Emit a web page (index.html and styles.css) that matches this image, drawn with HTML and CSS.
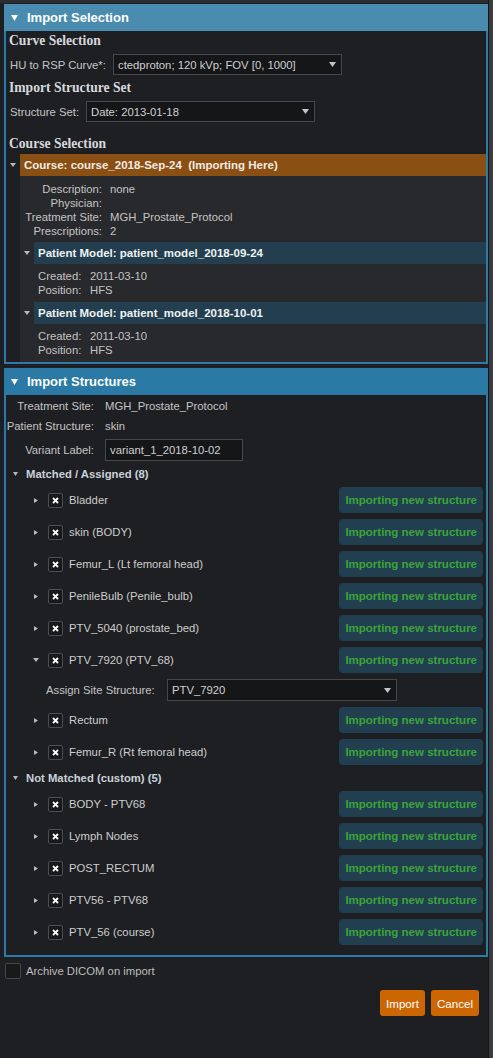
FILE: index.html
```html
<!DOCTYPE html>
<html>
<head>
<meta charset="utf-8">
<title>Import</title>
<link rel="stylesheet" href="styles.css">
</head>
<body>
<div class="app">
  <div class="main">
    <section class="panel">
      <div class="panel-header hdr-light">
        <svg class="hdr-caret" width="7" height="6" viewBox="0 0 7 6"><polygon points="0,0 7,0 3.5,6" fill="#fff"/></svg>
        <span>Import Selection</span>
      </div>
      <div class="panel-body">
        <h3 class="sec-title">Curve Selection</h3>
        <div class="field-row">
          <span class="lbl lbl-hu">HU to RSP Curve*:</span>
          <div class="select w229"><span class="sel-txt">ctedproton; 120 kVp; FOV [0, 1000]</span><svg width="7" height="5" viewBox="0 0 7 5"><polygon points="0,0 7,0 3.5,5" fill="#c4c4c4"/></svg></div>
        </div>
        <h3 class="sec-title mt3">Import Structure Set</h3>
        <div class="field-row mt4">
          <span class="lbl lbl-ss">Structure Set:</span>
          <div class="select w229"><span class="sel-txt">Date: 2013-01-18</span><svg width="7" height="5" viewBox="0 0 7 5"><polygon points="0,0 7,0 3.5,5" fill="#c4c4c4"/></svg></div>
        </div>
        <h3 class="sec-title mt12">Course Selection</h3>
        <div class="node-row">
          <span class="caret-col"><svg width="6" height="4" viewBox="0 0 6 4"><polygon points="0,0 6,0 3,4" fill="#b8b8b8"/></svg></span>
          <div class="course-bar">Course: course_2018-Sep-24&nbsp; (Importing Here)</div>
        </div>
        <div class="course-body">
          <div class="course-details">
            <span class="dl">Description:</span><span class="dv">none</span>
            <span class="dl">Physician:</span><span class="dv"></span>
            <span class="dl">Treatment Site:</span><span class="dv">MGH_Prostate_Protocol</span>
            <span class="dl">Prescriptions:</span><span class="dv">2</span>
          </div>
          <div class="pm">
            <div class="node-row">
              <span class="caret-col"><svg width="6" height="4" viewBox="0 0 6 4"><polygon points="0,0 6,0 3,4" fill="#b8b8b8"/></svg></span>
              <div class="pm-bar">Patient Model: patient_model_2018-09-24</div>
            </div>
            <div class="pm-details">
              <span>Created:</span><span>2011-03-10</span>
              <span>Position:</span><span>HFS</span>
            </div>
          </div>
          <div class="pm pm-last">
            <div class="node-row">
              <span class="caret-col"><svg width="6" height="4" viewBox="0 0 6 4"><polygon points="0,0 6,0 3,4" fill="#b8b8b8"/></svg></span>
              <div class="pm-bar">Patient Model: patient_model_2018-10-01</div>
            </div>
            <div class="pm-details">
              <span>Created:</span><span>2011-03-10</span>
              <span>Position:</span><span>HFS</span>
            </div>
          </div>
        </div>
      </div>
    </section>

    <section class="panel panel2">
      <div class="panel-header hdr-dark">
        <svg class="hdr-caret" width="7" height="6" viewBox="0 0 7 6"><polygon points="0,0 7,0 3.5,6" fill="#fff"/></svg>
        <span>Import Structures</span>
      </div>
      <div class="panel-body body2">
        <div class="info-row"><span class="info-lbl">Treatment Site:</span><span>MGH_Prostate_Protocol</span></div>
        <div class="info-row"><span class="info-lbl">Patient Structure:</span><span>skin</span></div>
        <div class="info-row input-row"><span class="info-lbl">Variant Label:</span><div class="text-input">variant_1_2018-10-02</div></div>

        <div class="group-row">
          <svg width="5" height="4" viewBox="0 0 5 4"><polygon points="0,0 5,0 2.5,4" fill="#b8b8b8"/></svg>
          <span>Matched / Assigned (8)</span>
        </div>
        <div class="item-row"><svg class="icaret" width="4" height="5" viewBox="0 0 4 5"><polygon points="0,0 4,2.5 0,5" fill="#b8b8b8"/></svg><span class="cbx"><svg width="7" height="7" viewBox="0 0 7 7"><path d="M1 1L6 6M6 1L1 6" stroke="#fff" stroke-width="1.8"/></svg></span><span class="iname">Bladder</span><span class="badge">Importing new structure</span></div>
        <div class="item-row"><svg class="icaret" width="4" height="5" viewBox="0 0 4 5"><polygon points="0,0 4,2.5 0,5" fill="#b8b8b8"/></svg><span class="cbx"><svg width="7" height="7" viewBox="0 0 7 7"><path d="M1 1L6 6M6 1L1 6" stroke="#fff" stroke-width="1.8"/></svg></span><span class="iname">skin (BODY)</span><span class="badge">Importing new structure</span></div>
        <div class="item-row"><svg class="icaret" width="4" height="5" viewBox="0 0 4 5"><polygon points="0,0 4,2.5 0,5" fill="#b8b8b8"/></svg><span class="cbx"><svg width="7" height="7" viewBox="0 0 7 7"><path d="M1 1L6 6M6 1L1 6" stroke="#fff" stroke-width="1.8"/></svg></span><span class="iname">Femur_L (Lt femoral head)</span><span class="badge">Importing new structure</span></div>
        <div class="item-row"><svg class="icaret" width="4" height="5" viewBox="0 0 4 5"><polygon points="0,0 4,2.5 0,5" fill="#b8b8b8"/></svg><span class="cbx"><svg width="7" height="7" viewBox="0 0 7 7"><path d="M1 1L6 6M6 1L1 6" stroke="#fff" stroke-width="1.8"/></svg></span><span class="iname">PenileBulb (Penile_bulb)</span><span class="badge">Importing new structure</span></div>
        <div class="item-row"><svg class="icaret" width="4" height="5" viewBox="0 0 4 5"><polygon points="0,0 4,2.5 0,5" fill="#b8b8b8"/></svg><span class="cbx"><svg width="7" height="7" viewBox="0 0 7 7"><path d="M1 1L6 6M6 1L1 6" stroke="#fff" stroke-width="1.8"/></svg></span><span class="iname">PTV_5040 (prostate_bed)</span><span class="badge">Importing new structure</span></div>
        <div class="item-row open"><svg class="icaret-down" width="6" height="4" viewBox="0 0 6 4"><polygon points="0,0 6,0 3,4" fill="#b8b8b8"/></svg><span class="cbx"><svg width="7" height="7" viewBox="0 0 7 7"><path d="M1 1L6 6M6 1L1 6" stroke="#fff" stroke-width="1.8"/></svg></span><span class="iname">PTV_7920 (PTV_68)</span><span class="badge">Importing new structure</span></div>
        <div class="assign-row">
          <span class="assign-lbl">Assign Site Structure:</span>
          <div class="select w230 h22"><span class="sel-txt">PTV_7920</span><svg width="7" height="5" viewBox="0 0 7 5"><polygon points="0,0 7,0 3.5,5" fill="#c4c4c4"/></svg></div>
        </div>
        <div class="item-row"><svg class="icaret" width="4" height="5" viewBox="0 0 4 5"><polygon points="0,0 4,2.5 0,5" fill="#b8b8b8"/></svg><span class="cbx"><svg width="7" height="7" viewBox="0 0 7 7"><path d="M1 1L6 6M6 1L1 6" stroke="#fff" stroke-width="1.8"/></svg></span><span class="iname">Rectum</span><span class="badge">Importing new structure</span></div>
        <div class="item-row"><svg class="icaret" width="4" height="5" viewBox="0 0 4 5"><polygon points="0,0 4,2.5 0,5" fill="#b8b8b8"/></svg><span class="cbx"><svg width="7" height="7" viewBox="0 0 7 7"><path d="M1 1L6 6M6 1L1 6" stroke="#fff" stroke-width="1.8"/></svg></span><span class="iname">Femur_R (Rt femoral head)</span><span class="badge">Importing new structure</span></div>

        <div class="group-row">
          <svg width="5" height="4" viewBox="0 0 5 4"><polygon points="0,0 5,0 2.5,4" fill="#b8b8b8"/></svg>
          <span>Not Matched (custom) (5)</span>
        </div>
        <div class="item-row"><svg class="icaret" width="4" height="5" viewBox="0 0 4 5"><polygon points="0,0 4,2.5 0,5" fill="#b8b8b8"/></svg><span class="cbx"><svg width="7" height="7" viewBox="0 0 7 7"><path d="M1 1L6 6M6 1L1 6" stroke="#fff" stroke-width="1.8"/></svg></span><span class="iname">BODY - PTV68</span><span class="badge">Importing new structure</span></div>
        <div class="item-row"><svg class="icaret" width="4" height="5" viewBox="0 0 4 5"><polygon points="0,0 4,2.5 0,5" fill="#b8b8b8"/></svg><span class="cbx"><svg width="7" height="7" viewBox="0 0 7 7"><path d="M1 1L6 6M6 1L1 6" stroke="#fff" stroke-width="1.8"/></svg></span><span class="iname">Lymph Nodes</span><span class="badge">Importing new structure</span></div>
        <div class="item-row"><svg class="icaret" width="4" height="5" viewBox="0 0 4 5"><polygon points="0,0 4,2.5 0,5" fill="#b8b8b8"/></svg><span class="cbx"><svg width="7" height="7" viewBox="0 0 7 7"><path d="M1 1L6 6M6 1L1 6" stroke="#fff" stroke-width="1.8"/></svg></span><span class="iname">POST_RECTUM</span><span class="badge">Importing new structure</span></div>
        <div class="item-row"><svg class="icaret" width="4" height="5" viewBox="0 0 4 5"><polygon points="0,0 4,2.5 0,5" fill="#b8b8b8"/></svg><span class="cbx"><svg width="7" height="7" viewBox="0 0 7 7"><path d="M1 1L6 6M6 1L1 6" stroke="#fff" stroke-width="1.8"/></svg></span><span class="iname">PTV56 - PTV68</span><span class="badge">Importing new structure</span></div>
        <div class="item-row"><svg class="icaret" width="4" height="5" viewBox="0 0 4 5"><polygon points="0,0 4,2.5 0,5" fill="#b8b8b8"/></svg><span class="cbx"><svg width="7" height="7" viewBox="0 0 7 7"><path d="M1 1L6 6M6 1L1 6" stroke="#fff" stroke-width="1.8"/></svg></span><span class="iname">PTV_56 (course)</span><span class="badge">Importing new structure</span></div>
      </div>
    </section>

    <div class="archive-row"><span class="cbx-empty"></span><span>Archive DICOM on import</span></div>
    <div class="btn-row">
      <button class="btn">Import</button>
      <button class="btn">Cancel</button>
    </div>
  </div>
  <div class="scrollbar"></div>
</div>
</body>
</html>
```
FILE: styles.css
```css
* { box-sizing: border-box; }
html, body { margin: 0; padding: 0; }
body {
  background: #1e1f22;
  font-family: "Liberation Sans", Arial, sans-serif;
  font-size: 11.3px;
  color: #c4c4c4;
  width: 493px;
  height: 1058px;
  overflow: hidden;
}
.app { display: flex; height: 1058px; }
.main {
  flex: 1;
  border-top: 3px solid #2c2d30;
  padding: 1px 0 0 4px;
}
.scrollbar {
  width: 5px;
  background: #3a3b3e;
  border-left: 1px solid #141518;
}

.panel-header {
  height: 27px;
  display: flex;
  align-items: center;
  padding-left: 7px;
  color: #fff;
  font-weight: bold;
  font-size: 13px;
}
.hdr-caret { margin-right: 9px; }
.hdr-light { background: #4a8cb0; }
.hdr-dark { background: #2b79a5; }
.panel2 { margin-top: 4px; }
.panel-body {
  border: 2px solid #2c7aa6;
  border-top: none;
}

.sec-title {
  margin: 0;
  height: 20px;
  line-height: 20px;
  padding-left: 3px;
  font-family: "Liberation Serif", "Times New Roman", serif;
  font-weight: bold;
  font-size: 13.6px;
  color: #d6d9dc;
}
.mt3 { margin-top: 3px; }
.mt4 { margin-top: 4px; }
.mt12 { margin-top: 12px; }

.field-row {
  display: flex;
  align-items: center;
  padding-left: 4px;
  margin-top: 3px;
  height: 21px;
}
.lbl { color: #c4c4c4; }
.lbl-hu { width: 103px; }
.lbl-ss { width: 76px; }

.select {
  display: flex;
  align-items: center;
  height: 21px;
  background: #151618;
  border: 1px solid #45484b;
  padding: 0 5px 0 4px;
  color: #d0d0d0;
}
.sel-txt { flex: 1; white-space: nowrap; overflow: hidden; }
.w229 { width: 229px; }
.w230 { width: 230px; }
.h22 { height: 22px; }

.node-row { display: flex; align-items: stretch; }
.caret-col {
  width: 14px;
  display: flex;
  align-items: center;
  justify-content: center;
}
.course-bar {
  flex: 1;
  height: 22px;
  line-height: 22px;
  background: #8a4f13;
  color: #f2ebe3;
  font-weight: bold;
  font-size: 11.5px;
  padding-left: 4px;
  white-space: nowrap;
}
.course-body {
  margin-left: 14px;
  background: #28292c;
  padding: 6px 0 0 0;
}
.course-details {
  display: grid;
  grid-template-columns: 82px 1fr;
  column-gap: 8px;
  line-height: 14px;
}
.dl { text-align: right; }
.pm { margin-top: 4px; }
.pm-bar {
  flex: 1;
  height: 22px;
  line-height: 22px;
  background: #233f4f;
  color: #eef2f4;
  font-weight: bold;
  font-size: 11.5px;
  padding-left: 4px;
  white-space: nowrap;
}
.pm-details {
  display: grid;
  grid-template-columns: 47px 1fr;
  column-gap: 5px;
  line-height: 14px;
  padding: 5px 0 1px 18px;
}
.pm-last .pm-details { padding-bottom: 5px; }

.body2 { padding: 1px 0 7px 0; }
.info-row {
  display: flex;
  align-items: center;
  height: 20px;
}
.info-lbl {
  width: 88px;
  text-align: right;
  margin-right: 11px;
  white-space: nowrap;
}
.input-row { margin-top: 3px; height: 22px; }
.text-input {
  width: 138px;
  height: 22px;
  line-height: 20px;
  background: #151618;
  border: 1px solid #45484b;
  padding-left: 4px;
  color: #d0d0d0;
}

.group-row {
  display: flex;
  align-items: center;
  height: 20px;
  padding-left: 7px;
  font-weight: bold;
  color: #c9d2da;
}
.input-row + .group-row { margin-top: 3px; }
.group-row svg { margin-right: 8px; }

.item-row {
  display: flex;
  align-items: center;
  height: 32px;
  padding-left: 28px;
  padding-right: 3px;
  color: #cdcdcd;
}
.icaret { margin-right: 10px; }
.icaret-down { margin-left: -1px; margin-right: 9px; }
.cbx {
  width: 15px;
  height: 15px;
  background: #18191b;
  border: 1px solid #4b4d50;
  border-radius: 2px;
  display: flex;
  align-items: center;
  justify-content: center;
  margin-right: 6px;
}
.iname { flex: 1; white-space: nowrap; }
.badge {
  height: 26px;
  line-height: 26px;
  padding: 0 6px;
  background: #223f4f;
  border-radius: 4px;
  color: #3aa53a;
  font-weight: bold;
  font-size: 11.5px;
  white-space: nowrap;
}

.assign-row {
  display: flex;
  align-items: center;
  height: 28px;
  padding-left: 40px;
}
.assign-lbl { width: 121px; white-space: nowrap; }

.archive-row {
  display: flex;
  align-items: center;
  margin-top: 6px;
  padding-left: 1px;
  height: 16px;
  color: #bdbdbd;
}
.cbx-empty {
  width: 16px;
  height: 16px;
  background: #18191b;
  border: 1px solid #45474a;
  border-radius: 2px;
  margin-right: 5px;
}
.btn-row {
  display: flex;
  justify-content: flex-end;
  gap: 6px;
  margin-top: 11px;
  padding-right: 9px;
}
.btn {
  height: 26px;
  padding: 0 6px;
  border: none;
  border-radius: 3px;
  background: #cc6600;
  color: #fff;
  font-family: "Liberation Sans", Arial, sans-serif;
  font-size: 11.6px;
}
```
